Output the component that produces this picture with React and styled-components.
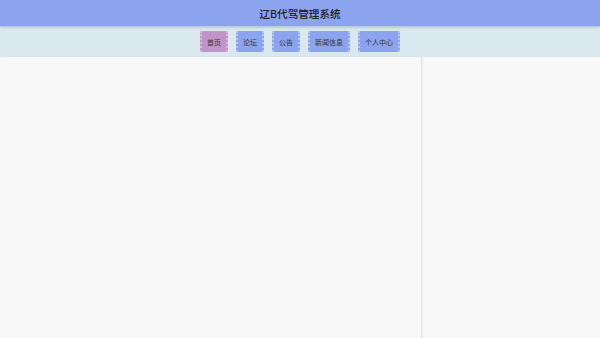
import React from 'react'
import styled, { createGlobalStyle } from 'styled-components'

const Global = createGlobalStyle`
  html, body {
    margin: 0;
    padding: 0;
    height: 100%;
    background: #f8f8f8;
    font-family: "Noto Sans CJK SC", "Noto Sans", sans-serif;
  }
  #root { height: 100%; }
`

const Page = styled.div`
  height: 100vh;
  display: flex;
  flex-direction: column;
  overflow: hidden;
`

const Header = styled.header`
  height: 26px;
  background: #8ca3ef;
  display: flex;
  align-items: center;
  justify-content: center;
  font-size: 10.6px;
  font-weight: 500;
  color: #1c1c1c;
  box-shadow: 0 1px 3px rgba(80, 90, 130, 0.35);
  position: relative;
  z-index: 1;
`

const Nav = styled.nav`
  height: 31px;
  background: #dae8f0;
  display: flex;
  align-items: center;
  justify-content: center;
  gap: 8px;
`

const NavButton = styled.div`
  height: 21px;
  padding: 0 5px;
  display: flex;
  align-items: center;
  box-sizing: border-box;
  font-size: 7px;
  color: #333;
  background: ${p => (p.$active ? '#c295c8' : '#8ca3ef')};
  border-left: 2px dotted ${p => (p.$active ? '#d8b9dc' : '#b8c6f5')};
  border-right: 2px dotted ${p => (p.$active ? '#d8b9dc' : '#b8c6f5')};
  cursor: pointer;
`

const Body = styled.div`
  flex: 1;
  display: flex;
`

const Main = styled.main`
  width: 421px;
  border-right: 1px solid #e2e2e2;
  box-shadow: 1px 0 2px rgba(0, 0, 0, 0.05);
`

const Side = styled.aside`
  flex: 1;
`

const items = ['首页', '论坛', '公告', '新闻信息', '个人中心']

export default function App() {
  return (
    <Page>
      <Global />
      <Header>辽B代驾管理系统</Header>
      <Nav>
        {items.map((t, i) => (
          <NavButton key={t} $active={i === 0}>{t}</NavButton>
        ))}
      </Nav>
      <Body>
        <Main />
        <Side />
      </Body>
    </Page>
  )
}
